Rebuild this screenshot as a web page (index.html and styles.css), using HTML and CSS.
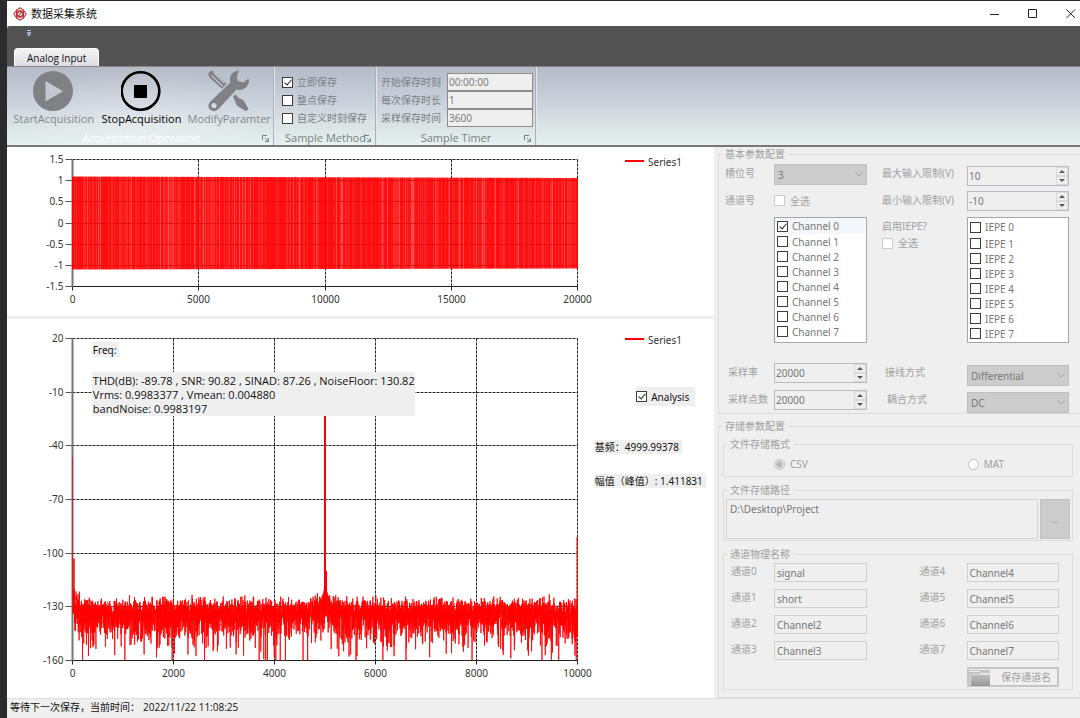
FILE: index.html
```html
<!DOCTYPE html>
<html lang="zh-CN">
<head>
<meta charset="utf-8">
<title>数据采集系统</title>
<link rel="stylesheet" href="styles.css">
</head>
<body>
<div class="window">
  <header class="titlebar">
    <svg class="logo" viewBox="0 0 14 14" fill="none" stroke="#b8323a" stroke-width="1.1">
      <path d="M7 .8L10.500 3v5L7 10 3.500 8V3zM7 4l3.500 2v5L7 13.200 3.500 11V6z"/>
      <path d="M.8 7L3 4h5l2 3-2 3H3zM4 7l2-3h5l2.200 3L11 10H6z"/>
      <path d="M5 10l4-6"/>
    </svg>
    <h1 class="title">数据采集系统</h1>
    <div class="winbtns">
      <button class="winbtn" aria-label="最小化"><svg viewBox="0 0 10 10"><path d="M0 5.500h9"/></svg></button>
      <button class="winbtn" aria-label="最大化"><svg viewBox="0 0 10 10"><path d="M.5.5h8v8h-8z"/></svg></button>
      <button class="winbtn" aria-label="关闭"><svg viewBox="0 0 10 10"><path d="M.5.5L9 9M9 .5L.5 9"/></svg></button>
    </div>
  </header>

  <nav class="tabs">
    <svg class="quick" viewBox="0 0 6 7"><path d="M1 .5h4M1 2.500h4" stroke="#a9c8e8"/><path d="M.5 3.500h5L3 6.500z" fill="#a9c8e8"/></svg>
    <button class="tab">Analog Input</button>
  </nav>

  <section class="ribbon">
    <div class="rgroup operation">
      <div class="bigs">
        <button class="big" disabled>
          <svg viewBox="0 0 42 42"><circle cx="20" cy="21" r="20" fill="#808184"/><path d="M12.500 11v20.500L30 21.200z" fill="#c4c9d1"/></svg>
          StartAcquisition
        </button>
        <button class="big active">
          <svg viewBox="0 0 42 42"><circle cx="19.500" cy="21" r="18.800" fill="none" stroke="#000" stroke-width="2.600"/><path d="M13 15h13v13H13z"/></svg>
          StopAcquisition
        </button>
        <button class="big" disabled>
          <svg viewBox="0 0 42 42" fill="#808184">
            <path d="M.5 5.500Q0 1 4.500.8L18.500 13.500 14 18.700 2 8z"/>
            <path d="M3.500 5.500l11 10.500M5.500 2.500l11 10.500" stroke="#c2c7cf" stroke-width="1.200"/>
            <path d="M25 26.500l2.500-2 4 4q4 .5 5 3.500l4 7-2.500 2.200-7-4.200q-3-1.500-3.500-4.700z"/>
            <path d="M31 .5q-8 .5-9 7.500-.3 2 .3 4.500L2.500 31.500q-4 4.500-.5 8 4.500 3.500 8.500-.5L28.500 19.500q6 1.500 10-2.500 3.500-4 2-8.500L35 12.500 30 11l-1.200-4.500z"/>
            <circle cx="6" cy="35.500" r="2.600" fill="#d3d9df"/>
          </svg>
          ModifyParamter
        </button>
      </div>
      <div class="caption pale">Acquisitition Operation</div>
      <svg class="launch" viewBox="0 0 7 7"><path d="M.5 5V.5H5M3 3l3 3M6.500 3v3.500H3"/></svg>
    </div>
    <div class="rgroup method">
      <div class="ropts">
        <label class="check"><input type="checkbox" checked>立即保存</label>
        <label class="check"><input type="checkbox">整点保存</label>
        <label class="check"><input type="checkbox">自定义时刻保存</label>
      </div>
      <div class="caption">Sample Method</div>
      <svg class="launch" viewBox="0 0 7 7"><path d="M.5 5V.5H5M3 3l3 3M6.500 3v3.500H3"/></svg>
    </div>
    <div class="rgroup timer">
      <div class="ropts">
        <label class="tfield"><span>开始保存时刻</span><input type="text" value="00:00:00" disabled></label>
        <label class="tfield"><span>每次保存时长</span><input type="text" value="1" disabled></label>
        <label class="tfield"><span>采样保存时间</span><input type="text" value="3600" disabled></label>
      </div>
      <div class="caption">Sample Timer</div>
      <svg class="launch" viewBox="0 0 7 7"><path d="M.5 5V.5H5M3 3l3 3M6.500 3v3.500H3"/></svg>
    </div>
  </section>

  <main class="main">
    <div class="charts">
      <div class="chart"><svg id="wave" viewBox="0 0 707 169"></svg></div>
      <div class="chart grow">
        <svg id="spectrum" viewBox="0 0 707 379"></svg>
        <div class="note freq">Freq:</div>
        <div class="note stats">THD(dB): -89.78 , SNR: 90.82 , SINAD: 87.26 , NoiseFloor: 130.82<br>Vrms: 0.9983377 , Vmean: 0.004880<br>bandNoise: 0.9983197</div>
        <label class="note check analysis"><input type="checkbox" checked>Analysis</label>
        <div class="note base">基频：4999.99378</div>
        <div class="note peak">幅值（峰值）: 1.411831</div>
      </div>
    </div>

    <aside class="side">
      <fieldset class="group outer">
        <legend>基本参数配置</legend>
        <div class="params">
          <label for="slot">槽位号</label>
          <div class="combo"><select id="slot" disabled><option>3</option></select><svg viewBox="0 0 8 5"><path d="M.5.5L4 4 7.500.5"/></svg></div>
          <label for="vmax">最大输入限制(V)</label>
          <div class="spin low"><input id="vmax" type="text" value="10" disabled><span class="arrows"><button aria-label="增加" disabled></button><button aria-label="减少" disabled></button></span></div>

          <span>通道号</span>
          <label class="check off"><input type="checkbox" disabled>全选</label>
          <label for="vmin">最小输入限制(V)</label>
          <div class="spin"><input id="vmin" type="text" value="-10" disabled><span class="arrows"><button aria-label="增加" disabled></button><button aria-label="减少" disabled></button></span></div>

          <div class="list second">
            <label class="check sel"><input type="checkbox" checked>Channel 0</label>
            <label class="check"><input type="checkbox">Channel 1</label>
            <label class="check"><input type="checkbox">Channel 2</label>
            <label class="check"><input type="checkbox">Channel 3</label>
            <label class="check"><input type="checkbox">Channel 4</label>
            <label class="check"><input type="checkbox">Channel 5</label>
            <label class="check"><input type="checkbox">Channel 6</label>
            <label class="check"><input type="checkbox">Channel 7</label>
          </div>
          <div class="iepe"><span>启用IEPE?</span><label class="check off"><input type="checkbox" disabled>全选</label></div>
          <div class="list">
            <label class="check first"><input type="checkbox">IEPE 0</label>
            <label class="check"><input type="checkbox">IEPE 1</label>
            <label class="check"><input type="checkbox">IEPE 2</label>
            <label class="check"><input type="checkbox">IEPE 3</label>
            <label class="check"><input type="checkbox">IEPE 4</label>
            <label class="check"><input type="checkbox">IEPE 5</label>
            <label class="check"><input type="checkbox">IEPE 6</label>
            <label class="check"><input type="checkbox">IEPE 7</label>
          </div>
        </div>
        <div class="params sampling">
          <label class="inset" for="rate">采样率</label>
          <div class="spin"><input id="rate" type="text" value="20000" disabled><span class="arrows"><button aria-label="增加" disabled></button><button aria-label="减少" disabled></button></span></div>
          <label class="inset" for="wiring">接线方式</label>
          <div class="combo low"><select id="wiring" disabled><option>Differential</option></select><svg viewBox="0 0 8 5"><path d="M.5.5L4 4 7.500.5"/></svg></div>
          <label class="inset" for="points">采样点数</label>
          <div class="spin"><input id="points" type="text" value="20000" disabled><span class="arrows"><button aria-label="增加" disabled></button><button aria-label="减少" disabled></button></span></div>
          <label class="inset wide" for="coupling">耦合方式</label>
          <div class="combo low"><select id="coupling" disabled><option>DC</option></select><svg viewBox="0 0 8 5"><path d="M.5.5L4 4 7.500.5"/></svg></div>
        </div>
      </fieldset>

      <fieldset class="group outer storage">
        <legend>存储参数配置</legend>
        <fieldset class="group inner">
          <legend>文件存储格式</legend>
          <div class="formats">
            <label class="radio"><input type="radio" name="fmt" checked disabled>CSV</label>
            <label class="radio"><input type="radio" name="fmt" disabled>MAT</label>
          </div>
        </fieldset>
        <fieldset class="group inner">
          <legend>文件存储路径</legend>
          <div class="path">
            <textarea aria-label="文件存储路径" disabled>D:\Desktop\Project</textarea>
            <button class="browse" disabled>...</button>
          </div>
        </fieldset>
        <fieldset class="group inner">
          <legend>通道物理名称</legend>
          <div class="names">
            <label for="c0">通道0</label><input id="c0" type="text" value="signal" disabled>
            <label for="c4">通道4</label><input id="c4" type="text" value="Channel4" disabled>
            <label for="c1">通道1</label><input id="c1" type="text" value="short" disabled>
            <label for="c5">通道5</label><input id="c5" type="text" value="Channel5" disabled>
            <label for="c2">通道2</label><input id="c2" type="text" value="Channel2" disabled>
            <label for="c6">通道6</label><input id="c6" type="text" value="Channel6" disabled>
            <label for="c3">通道3</label><input id="c3" type="text" value="Channel3" disabled>
            <label for="c7">通道7</label><input id="c7" type="text" value="Channel7" disabled>
            <button class="save" disabled>
              <svg viewBox="0 0 21 17"><defs><linearGradient id="fold" x2="0" y2="1"><stop stop-color="#bdbdbd"/><stop offset="1" stop-color="#989898"/></linearGradient></defs><path d="M0 1h21v16H0z" fill="#c4c4c4"/><path d="M0 2.500h11l1.500 2H21" fill="none" stroke="#efefef"/><path d="M2 17V6h19v11z" fill="url(#fold)"/><path d="M1.500 16V5.500h19.500" fill="none" stroke="#dcdcdc"/></svg>
              <span>保存通道名</span>
            </button>
          </div>
        </fieldset>
      </fieldset>
    </aside>
  </main>

  <footer class="status">等待下一次保存，当前时间：<time>2022/11/22 11:08:25</time></footer>
</div>
<script src="charts.js"></script>
</body>
</html>
```
FILE: styles.css
```css
* { box-sizing: border-box; }
body {
  margin: 0;
  padding: 1px 0 1px 7px;
  min-height: 100vh;
  display: flex;
  background: #2b2b2d;
  font: 10px/14px "Noto Sans", "Noto Sans CJK SC", sans-serif;
  color: #111;
}
button, input, select, textarea { font: inherit; color: inherit; margin: 0; }
button { padding: 0; border: 0; background: none; }
.window { flex: 1; min-width: 0; display: flex; flex-direction: column; background: #efefef; }

/* title bar */
.titlebar { display: flex; align-items: center; height: 25px; padding-left: 6px; background: #fff; }
.logo { width: 14px; height: 14px; }
.title { margin: 0 auto 0 4px; font-size: 11px; font-weight: 400; line-height: 16px; }
.winbtns { display: flex; gap: 28px; padding-right: 4px; }
.winbtn { width: 10px; height: 10px; display: flex; }
.winbtn svg { width: 10px; height: 10px; fill: none; stroke: #222; }

/* ribbon */
.tabs {
  display: flex; flex-direction: column; justify-content: space-between; align-items: flex-start;
  height: 41px; padding: 4px 0 0 7px;
  background: #535353; border-bottom: 1px solid #8c8486; border-top-left-radius: 3px;
}
.quick { width: 6px; height: 7px; margin-left: 12px; fill: none; }
.tab {
  height: 18px; padding: 0 12px; font-family: "Open Sans", sans-serif;
  background: linear-gradient(#f3f3f5, #dcdde2);
  border: 1px solid #fff; border-bottom: 0; border-radius: 4px 4px 0 0;
}
.ribbon {
  display: flex; height: 80px;
  background: linear-gradient(#b5bcc7, #cdd3dd 50%, #d9e1e3 70%, #e4f1ef);
  border-bottom: 2px solid #787878;
}
.rgroup {
  position: relative; display: flex; flex-direction: column; justify-content: space-between;
  border-right: 1px solid #a9b0b8; box-shadow: 1px 0 #e4e8ee;
  color: #7b7e83;
}
.operation {
  width: 267px; padding: 3px 0 0 3px;
  background: radial-gradient(ellipse 120px 50px at 50% 70%, rgba(255,255,255,.3), rgba(255,255,255,0));
}
.bigs { display: flex; }
.big {
  flex: 1; display: flex; flex-direction: column; align-items: center;
  font-size: 11px; line-height: 14px; font-family: "Open Sans", sans-serif; color: #84878c;
}
.big svg { width: 42px; height: 42px; }
.big.active { color: #000; }
.caption { font: 11px/14px "Open Sans", sans-serif; text-align: center; }
.caption.pale { color: #fff; }
.launch {
  position: absolute; right: 4px; bottom: 3px; width: 7px; height: 7px;
  fill: none; stroke: #7c8186;
}
.method { width: 102px; padding: 6px 0 0 8px; }
.method .caption { padding-right: 6px; }
.timer { width: 160px; padding: 6px 0 0 5px; }
.timer .caption { padding-right: 4px; }
.ropts { display: flex; flex-direction: column; }
.ropts .check { height: 18px; }
.tfield { display: flex; justify-content: space-between; align-items: center; padding-right: 2px; }
.tfield input {
  width: 86px; height: 18px; padding: 0 1px;
  border: 1px solid #8d8d8d; background: #efefef; color: #7b7b7b;
}

/* shared controls */
.check { display: flex; align-items: center; gap: 4px; white-space: nowrap; }
.check input {
  appearance: none; position: relative; flex: none;
  width: 11px; height: 11px; border: 1px solid #3c3c3c; background: #fff;
}
.check input:checked::after {
  content: ""; position: absolute; left: 3px; top: 0;
  width: 3px; height: 6px; border: solid #222; border-width: 0 1px 1px 0; transform: rotate(40deg);
}
.check.off input { border-color: #ccc; }
.check.off { gap: 5px; }
.radio { display: flex; align-items: center; gap: 5px; }
.radio input {
  appearance: none; width: 11px; height: 11px; border: 1px solid #bdbdbd;
  border-radius: 50%; background: #fff;
}
.radio input:checked { background: radial-gradient(#bcbcbc 3px, #efefef 4px); }

/* charts */
.main { flex: 1; display: grid; grid-template-columns: minmax(0, 707fr) minmax(0, 366fr); }
.charts { display: flex; flex-direction: column; gap: 3px; }
.chart { position: relative; background: #fff; }
.chart.grow { flex: 1; }
.chart > svg { display: block; width: 100%; }
.axis { fill: #333; font: 10px "Noto Sans", sans-serif; }
.note { position: absolute; padding: 0 3px 0 1px; background: #efefef; white-space: nowrap; }
.freq { left: 12%; top: 6%; padding-top: 1px; }
.stats { left: 12%; top: 14%; padding: 2px 0 0 1px; font: 11px/14px "Open Sans", sans-serif; }
.analysis { left: 89%; top: 18%; height: 19px; padding: 0 6px 0 0; }
.base { left: 83%; top: 32%; }
.peak { left: 83%; top: 41%; }

/* parameter panel */
.side { padding-left: 4px; color: #a0a0a0; min-width: 0; }
.group { margin: 0; padding: 0; min-width: 0; border: 1px solid #dcdcdc; }
.group legend { padding: 0 3px; margin-left: 3px; line-height: 14px; }
.outer { border-right: 0; }
.storage { margin-top: 5px; padding: 4px 7px 7px 4px; }
.storage > legend { margin-left: -1px; }
.inner + .inner { margin-top: 6px; }
.params {
  display: grid; grid-template-columns: 49px minmax(0, 93fr) 15px 85px minmax(0, 102fr);
  gap: 5px 0; padding: 3px 11px 0 6px;
}
.params > :nth-child(2), .params > :nth-child(6) { grid-column: 2; }
.params > :nth-child(3), .params > :nth-child(7), .iepe { grid-column: 4; }
.params > label, .params > span { line-height: 19px; }
.params > .check { line-height: 14px; height: 19px; }
.second { grid-column: 2; }
.iepe { display: flex; flex-direction: column; gap: 3px; padding-top: 3px; }
.list {
  margin-top: 1px; padding: 0 1px 1px 2px; background: #fff; border: 1px solid #a3a7ad; color: #767676;
}
.list .check { height: 15px; }
.list .sel { background: #f3f6fb; height: 16px; }
.list .first { height: 18px; }
.combo { position: relative; height: 21px; }
.combo select {
  appearance: none; width: 100%; height: 100%; padding: 0 3px;
  background: #ccc; border: 1px solid #bfbfbf; border-radius: 0; color: #777; opacity: 1;
}
.combo svg {
  position: absolute; right: 4px; top: 8px; width: 8px; height: 5px; fill: none; stroke: #a3a3a3;
}
.low { margin-top: 2px; }
.spin { display: flex; height: 20px; border: 1px solid #b9bbc0; }
.spin input { flex: 1; min-width: 0; padding: 0 1px; border: 0; background: #efefef; color: #777; }
.sampling { margin-top: 18px; padding-top: 2px; row-gap: 4px; }
.sampling .inset { padding-left: 3px; }
.sampling .wide { padding-left: 5px; }
.arrows { display: flex; flex-direction: column; width: 12px; }
.arrows button {
  flex: 1; display: flex; align-items: center; justify-content: center; border: 1px solid #dadada;
}
.arrows button::before {
  content: ""; border: 3px solid transparent; border-top-width: 0; border-bottom-color: #555;
}
.arrows button + button::before { border-width: 3px 3px 0; border-top-color: #555; }

.formats { display: grid; grid-template-columns: 193fr 104fr; height: 25px; padding: 1px 0 0 50px; }
.path { display: flex; gap: 2px; padding: 2px 2px 1px; height: 43px; }
.path textarea {
  flex: 1; min-width: 0; resize: none; padding: 2px 3px; line-height: 14px;
  background: #efefef; border: 1px solid #d4d4d4; color: #777;
}
.browse { width: 30px; background: #ccc; border: 1px solid #c2c2c2; color: #999; }
.names {
  display: grid; grid-template-columns: 43px minmax(0, 93fr) 53px 47px minmax(0, 93fr);
  gap: 7px 0; padding: 2px 13px 2px 7px;
}
.names label { line-height: 17px; }
.names label:nth-of-type(even) { grid-column: 4; }
.names input { height: 19px; padding: 0 2px; background: #efefef; border: 1px solid #cfcfcf; color: #777; }
.save {
  grid-column: 5; display: flex; align-items: center; height: 20px;
  border: 2px solid #c6c6c6; color: #a0a0a0;
}
.save svg { width: 21px; height: 17px; }
.save span { flex: 1; text-align: center; padding-left: 6px; }

.status {
  height: 20px; padding-left: 3px; border-top: 1px solid #dedede;
  font-size: 10px; line-height: 17px;
}
.status time { margin-left: 3px; font-family: "Open Sans", sans-serif; }
```
FILE: charts.js
```js
const NS = "http://www.w3.org/2000/svg";
const LEFT = 65.5, RIGHT = 570.5;

/* seeded generator, so every load draws the same trace */
let seed = 20221122;
function rand() {
  seed = (seed + 0x6D2B79F5) | 0;
  let t = Math.imul(seed ^ (seed >>> 15), 1 | seed);
  t = (t + Math.imul(t ^ (t >>> 7), 61 | t)) ^ t;
  return (((t ^ (t >>> 14)) >>> 0) + 1) / 4294967297;
}

function add(svg, tag, attrs, text) {
  const el = document.createElementNS(NS, tag);
  for (const key in attrs) el.setAttribute(key, attrs[key]);
  if (text !== undefined) el.textContent = text;
  svg.appendChild(el);
  return el;
}

function frame(svg, top, bottom, yLabels, xLabels) {
  const line = (d, extra) => add(svg, "path", Object.assign({ d, fill: "none", stroke: "#222" }, extra));
  yLabels.forEach((label, i) => {
    const y = Math.round(top + (bottom - top) * i / (yLabels.length - 1) - .5) + .5;
    if (i < yLabels.length - 1) line(`M${LEFT} ${y}H${RIGHT}`, { "stroke-dasharray": "3 1" });
    line(`M${LEFT - 7} ${y}H${LEFT}`, { stroke: "#555" });
    add(svg, "text", { x: LEFT - 9, y: y + 3.5, "text-anchor": "end", class: "axis" }, label);
  });
  xLabels.forEach((label, i) => {
    const x = Math.round(LEFT + (RIGHT - LEFT) * i / (xLabels.length - 1) - .5) + .5;
    if (i > 0) line(`M${x} ${top}V${bottom}`, { "stroke-dasharray": "3 1" });
    line(`M${x} ${bottom}v4`);
    add(svg, "text", { x, y: bottom + 16, "text-anchor": "middle", class: "axis" }, label);
  });
  line(`M${LEFT} ${bottom}H${RIGHT}`);
  line(`M${LEFT} ${top}V${bottom}`, { stroke: "#777", "stroke-width": 2 });
}

function legend(svg, y) {
  add(svg, "path", { d: `M618 ${y}h19`, stroke: "#f00", "stroke-width": 2 });
  add(svg, "text", { x: 641, y: y + 5, class: "axis" }, "Series1");
}

/* time-domain signal: a dense band with lighter columns */
const wave = document.getElementById("wave");
frame(wave, 12.5, 139.5, ["1.5", "1", "0.5", "0", "-0.5", "-1", "-1.5"], ["0", "5000", "10000", "15000", "20000"]);
for (let x = 65; x < 571; x++) {
  const drift = (x - 65) / 505;
  const y0 = 29.5 + drift * 1.5;
  const y1 = 122.5 - drift * 1;
  const r = rand();
  const opacity = r < .08 ? .7 : r < .4 ? .84 : .94;
  add(wave, "rect", { x, y: y0, width: 1, height: y1 - y0, fill: "#f00", "fill-opacity": opacity });
}
legend(wave, 14);

/* spectrum: noise floor with skirts and three spikes */
const spectrum = document.getElementById("spectrum");
frame(spectrum, 19.5, 341.5, ["20", "-10", "-40", "-70", "-100", "-130", "-160"], ["0", "2000", "4000", "6000", "8000", "10000"]);
const toY = db => 19.5 + (20 - Math.max(db, -160)) * 322 / 180;
let d = "";
const N = 5000;
for (let i = 0; i <= N; i++) {
  const f = i / N * 10000;
  let db = -132.5 + 11 * Math.log10(-Math.log(rand()));
  db = Math.min(db, -124.5 + rand() * 3);
  db += 8 * Math.exp(-f / 120) + 8 * Math.exp(-Math.abs(f - 5000) / 110);
  const x = LEFT + (RIGHT - LEFT) * i / N;
  d += (i ? "L" : "M") + x.toFixed(2) + " " + toY(db).toFixed(1);
}
add(spectrum, "path", { d, fill: "none", stroke: "#f00", "stroke-width": .9, "stroke-opacity": .92, "stroke-linejoin": "bevel" });
add(spectrum, "path", { d: `M65.500 ${toY(-46)}V${toY(-134)}`, stroke: "#a33", "stroke-width": 1 });
add(spectrum, "path", { d: `M67 ${toY(-103)}V${toY(-130)}`, stroke: "#f00", "stroke-width": 1.5 });
add(spectrum, "path", { d: `M318 ${toY(-20)}V${toY(-135)}M319 ${toY(-110)}V${toY(-130)}`, stroke: "#f00", "stroke-width": 2 });
add(spectrum, "path", { d: `M570 ${toY(-91)}V${toY(-146)}`, stroke: "#f00", "stroke-opacity": .7, "stroke-width": 1.5 });
legend(spectrum, 20);
```
